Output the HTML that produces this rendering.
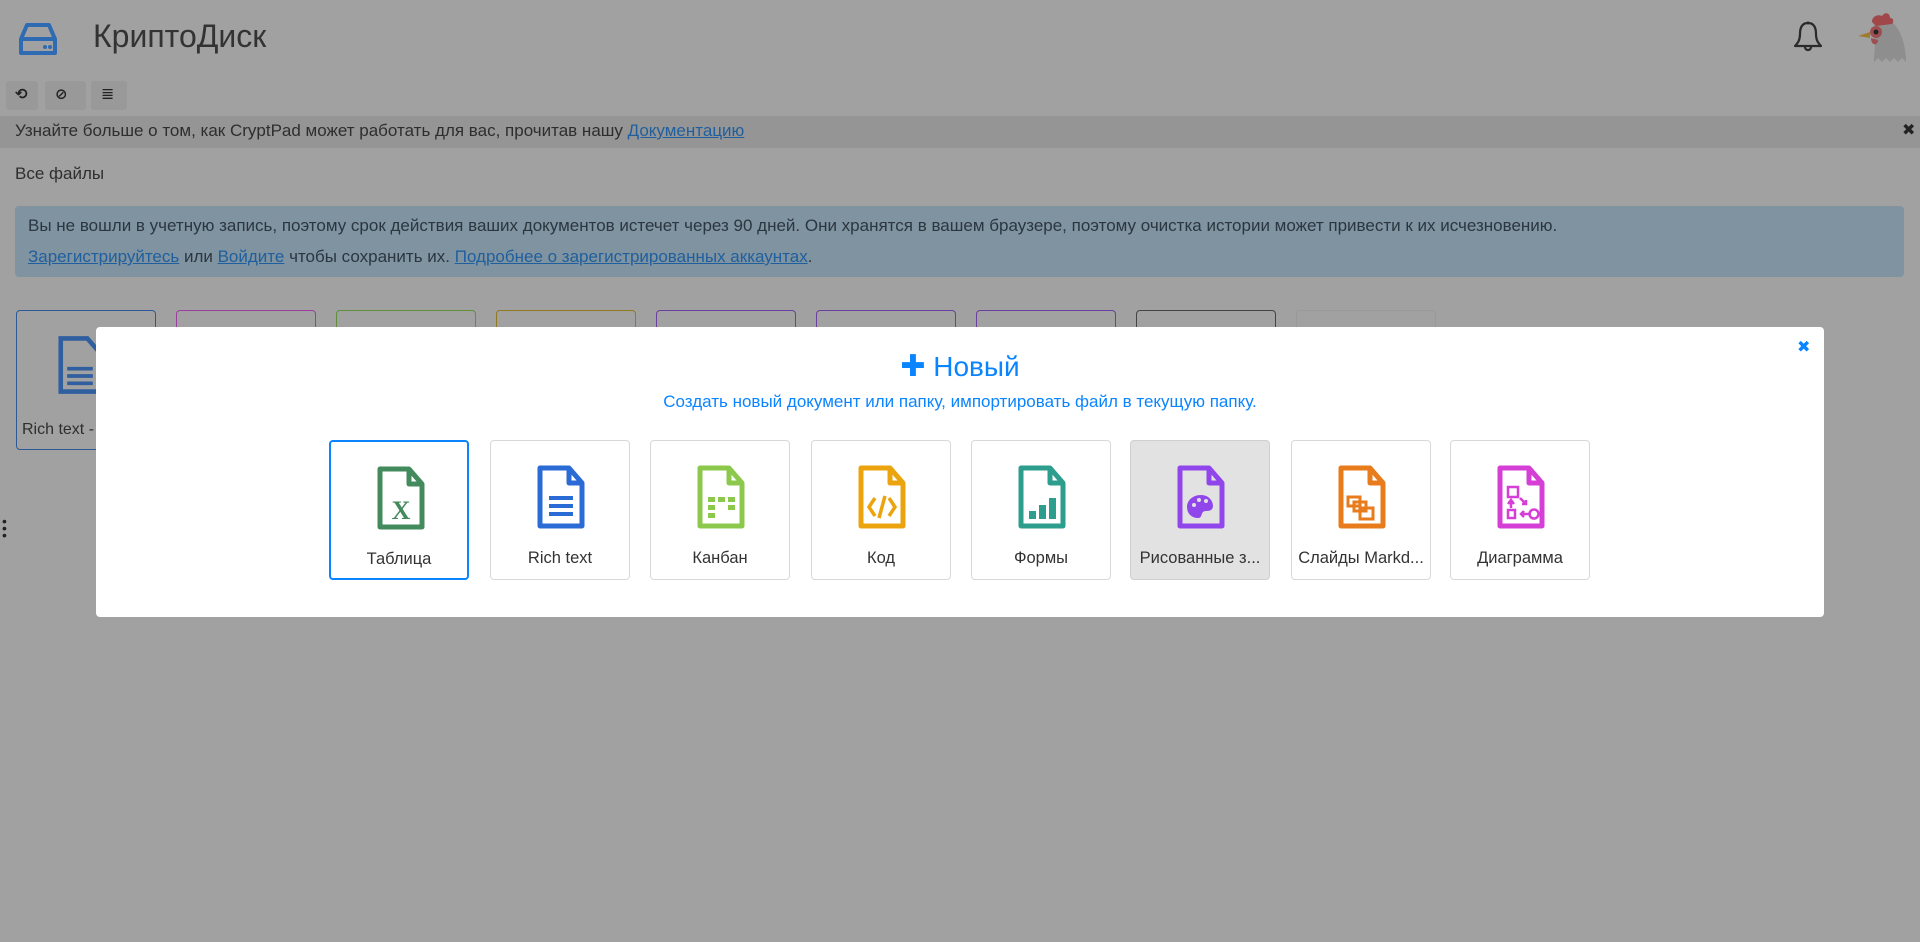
<!DOCTYPE html>
<html><head><meta charset="utf-8"><style>
*{box-sizing:border-box;margin:0;padding:0}
body{width:1920px;height:942px;background:#a1a1a1;font-family:"Liberation Sans","DejaVu Sans",sans-serif;position:relative;overflow:hidden;color:#2e2e2e}
.abs{position:absolute}
a{color:#1f5f9e;text-decoration:underline}
.tb{position:absolute;top:81px;height:29px;background:#999;border-radius:3px}
.tile{position:absolute;top:310px;width:140px;height:140px;border:1px solid;border-radius:4px}
.card{position:absolute;top:440px;width:140px;height:140px;border:1px solid #d8d8d8;border-radius:4px;background:#fff;text-align:center;font-size:16.5px;color:#333}
.card svg{position:absolute;left:43px;top:24px}
.card span{position:absolute;left:0;right:0;top:107px;line-height:20px;white-space:nowrap;overflow:hidden;text-overflow:ellipsis;padding:0 6px}
</style></head><body>
<!-- header -->
<svg class="abs" style="left:18px;top:22px" width="40" height="34" viewBox="0 0 40 34"><path d="M9 3 H31 L37 17 V31 H3 V17 Z M3 17 H37" fill="none" stroke="#2f6bb3" stroke-width="4" stroke-linejoin="round"/><circle cx="27" cy="25" r="2" fill="#2f6bb3"/><circle cx="32" cy="25" r="2" fill="#2f6bb3"/></svg>
<div class="abs" style="left:93px;top:18px;font-size:32px;color:#333">КриптоДиск</div>
<svg class="abs" style="left:1792px;top:20px" width="32" height="34" viewBox="0 0 32 34"><path d="M16 3 C9 3 8 9 8 14 C8 20 6 23 3 26 H29 C26 23 24 20 24 14 C24 9 23 3 16 3 Z M13 27 C13 31 19 31 19 27" fill="none" stroke="#2a2a2a" stroke-width="2.2" stroke-linejoin="round"/><circle cx="16" cy="3" r="1.5" fill="#2a2a2a"/></svg>
<svg class="abs" style="left:1856px;top:12px" width="56" height="54" viewBox="0 0 56 54"><path d="M18 14 C22 6 32 6 38 12 C46 20 50 36 50 50 L46 46 L42 50 L38 46 L34 50 L30 46 L26 50 L22 46 L18 50 C18 40 20 32 18 26 Z" fill="#8e8e8e"/><path d="M16 10 C16 4 22 2 26 4 C28 0 34 0 34 6 C38 6 38 10 36 12 L20 14 Z" fill="#a0474a"/><path d="M14 20 L2 24 L14 26 Z" fill="#9d7d2e"/><circle cx="20" cy="20" r="6" fill="#9e4d50"/><circle cx="20" cy="20" r="2.5" fill="#222"/><path d="M15 26 C15 34 22 34 22 28 Z" fill="#9e4d50"/></svg>
<!-- toolbar -->
<div class="tb" style="left:6px;width:32px"></div>
<div class="tb" style="left:45px;width:41px"></div>
<div class="tb" style="left:91px;width:36px"></div>
<div class="abs" style="left:15px;top:85px;font-size:15px;color:#222;font-weight:bold">⟲</div>
<div class="abs" style="left:55px;top:85px;font-size:15px;color:#222;font-weight:bold">⊘</div>
<div class="abs" style="left:101px;top:84px;font-size:16px;color:#222">≣</div>
<!-- info bar -->
<div class="abs" style="left:0;top:116px;width:1920px;height:32px;background:#959595"></div>
<div class="abs" style="left:15px;top:121px;font-size:17px;color:#2e2e2e">Узнайте больше о том, как CryptPad может работать для вас, прочитав нашу <a>Документацию</a></div>
<div class="abs" style="left:1902px;top:120px;font-size:16px;color:#222;font-weight:bold">✖</div>
<div class="abs" style="left:15px;top:164px;font-size:17px">Все файлы</div>
<!-- alert -->
<div class="abs" style="left:15px;top:206px;width:1889px;height:71px;background:#8093a0;border-radius:4px"></div>
<div class="abs" style="left:28px;top:216px;font-size:17px;color:#2a3640">Вы не вошли в учетную запись, поэтому срок действия ваших документов истечет через 90 дней. Они хранятся в вашем браузере, поэтому очистка истории может привести к их исчезновению.</div>
<div class="abs" style="left:28px;top:247px;font-size:17px;color:#2a3640"><a>Зарегистрируйтесь</a> или <a>Войдите</a> чтобы сохранить их. <a>Подробнее о зарегистрированных аккаунтах</a>.</div>
<!-- tiles behind -->
<div class="tile" style="left:16px;border-color:#2d5a96"></div>
<svg class="abs" style="left:58px;top:333px" width="44" height="64" viewBox="0 0 48 64"><path d="M3 3 H32 L45 18 V61 H3 Z" fill="none" stroke="#2f5f9e" stroke-width="5"/><path d="M10 36 H38 M10 44 H38 M10 52 H38" stroke="#2f5f9e" stroke-width="4"/></svg>
<div class="abs" style="left:22px;top:421px;font-size:16px">Rich text - T</div>
<div class="tile" style="left:176px;border-color:#9a3f9e"></div>
<div class="tile" style="left:336px;border-color:#5f8f3a"></div>
<div class="tile" style="left:496px;border-color:#8f7a20"></div>
<div class="tile" style="left:656px;border-color:#6a3fa0"></div>
<div class="tile" style="left:816px;border-color:#6a3fa0"></div>
<div class="tile" style="left:976px;border-color:#6a3fa0"></div>
<div class="tile" style="left:1136px;border-color:#444"></div>
<div class="tile" style="left:1296px;border-color:#999"></div>
<div class="abs" style="left:2px;top:518px;width:5px;font-size:14px;line-height:7px;color:#222">•<br>•<br>•</div>
<!-- modal -->
<div class="abs" style="left:96px;top:327px;width:1728px;height:290px;background:#fff;border-radius:4px"></div>
<div class="abs" style="left:1797px;top:337px;font-size:16px;color:#0a84ff;font-weight:bold">✖</div>
<div class="abs" style="left:0;width:1920px;top:349px;text-align:center;font-size:28px;color:#0a84ff"><b style="font-size:30px">✚</b> Новый</div>
<div class="abs" style="left:0;width:1920px;top:392px;text-align:center;font-size:17px;color:#0a84ff">Создать новый документ или папку, импортировать файл в текущую папку.</div>
<div class="card" style="left:329px;border:2px solid #0a84ff"><svg width="54" height="64" viewBox="0 0 48 64"><path d="M3 3 H32 L45 18 V61 H3 Z M32 3 V18 H45" fill="none" stroke="#438a5c" stroke-width="5" stroke-linejoin="round"/><text x="24" y="53" text-anchor="middle" font-family="Liberation Serif,serif" font-weight="bold" font-size="26" fill="#438a5c">X</text></svg><span>Таблица</span></div>
<div class="card" style="left:490px"><svg width="54" height="64" viewBox="0 0 48 64"><path d="M3 3 H32 L45 18 V61 H3 Z M32 3 V18 H45" fill="none" stroke="#2b6bd6" stroke-width="5" stroke-linejoin="round"/><path d="M12 33 H36 M12 41 H36 M12 49 H36" stroke="#2b6bd6" stroke-width="4"/></svg><span>Rich text</span></div>
<div class="card" style="left:650px"><svg width="54" height="64" viewBox="0 0 48 64"><path d="M3 3 H32 L45 18 V61 H3 Z M32 3 V18 H45" fill="none" stroke="#8cc84b" stroke-width="5" stroke-linejoin="round"/><path d="M11 32h7v5h-7zM21 32h7v5h-7zM31 32h7v5h-7zM11 40h7v5h-7zM31 40h7v5h-7zM11 48h7v5h-7z" fill="#8cc84b"/></svg><span>Канбан</span></div>
<div class="card" style="left:811px"><svg width="54" height="64" viewBox="0 0 48 64"><path d="M3 3 H32 L45 18 V61 H3 Z M32 3 V18 H45" fill="none" stroke="#eba40d" stroke-width="5" stroke-linejoin="round"/><path d="M17 33 L11 42 L17 51 M31 33 L37 42 L31 51 M27 31 L21 53" fill="none" stroke="#eba40d" stroke-width="3.5"/></svg><span>Код</span></div>
<div class="card" style="left:971px"><svg width="54" height="64" viewBox="0 0 48 64"><path d="M3 3 H32 L45 18 V61 H3 Z M32 3 V18 H45" fill="none" stroke="#2d9d8e" stroke-width="5" stroke-linejoin="round"/><path d="M11 46h7v8h-7zM21 40h7v14h-7zM31 33h7v21h-7z" fill="#2d9d8e"/></svg><span>Формы</span></div>
<div class="card" style="left:1130px;background:#e2e2e2;border-color:#cfcfcf"><svg width="54" height="64" viewBox="0 0 48 64"><path d="M3 3 H32 L45 18 V61 H3 Z M32 3 V18 H45" fill="none" stroke="#9146ec" stroke-width="5" stroke-linejoin="round"/><path d="M24 30 C15 30 10 36 10 42 C10 49 15 53 21 53 C25 53 24 49 26 47 C28 45 33 47 35 44 C38 40 34 30 24 30 Z" fill="#9146ec"/><circle cx="17" cy="40" r="2" fill="#e2e2e2"/><circle cx="22" cy="35" r="2" fill="#e2e2e2"/><circle cx="29" cy="36" r="2" fill="#e2e2e2"/></svg><span>Рисованные з...</span></div>
<div class="card" style="left:1291px"><svg width="54" height="64" viewBox="0 0 48 64"><path d="M3 3 H32 L45 18 V61 H3 Z M32 3 V18 H45" fill="none" stroke="#e87b1c" stroke-width="5" stroke-linejoin="round"/><path d="M10 32h12v9h-12zM16 37h12v9h-12zM22 43h13v11h-13z" fill="#fff" stroke="#e87b1c" stroke-width="3"/></svg><span>Слайды Markd...</span></div>
<div class="card" style="left:1450px"><svg width="54" height="64" viewBox="0 0 48 64"><path d="M3 3 H32 L45 18 V61 H3 Z M32 3 V18 H45" fill="none" stroke="#d63fd6" stroke-width="5" stroke-linejoin="round"/><path d="M11 22h10v10h-10zM11 45h7v8h-7z M14 43 V36 M11 39 L14 35 L17 39 M23 33 L29 39 M25 39 H29 V35 M34 49 H24 M27 46 L24 49 L27 52" fill="none" stroke="#d63fd6" stroke-width="2.5"/><circle cx="37" cy="49" r="4.5" fill="none" stroke="#d63fd6" stroke-width="2.5"/></svg><span>Диаграмма</span></div>
</body></html>
